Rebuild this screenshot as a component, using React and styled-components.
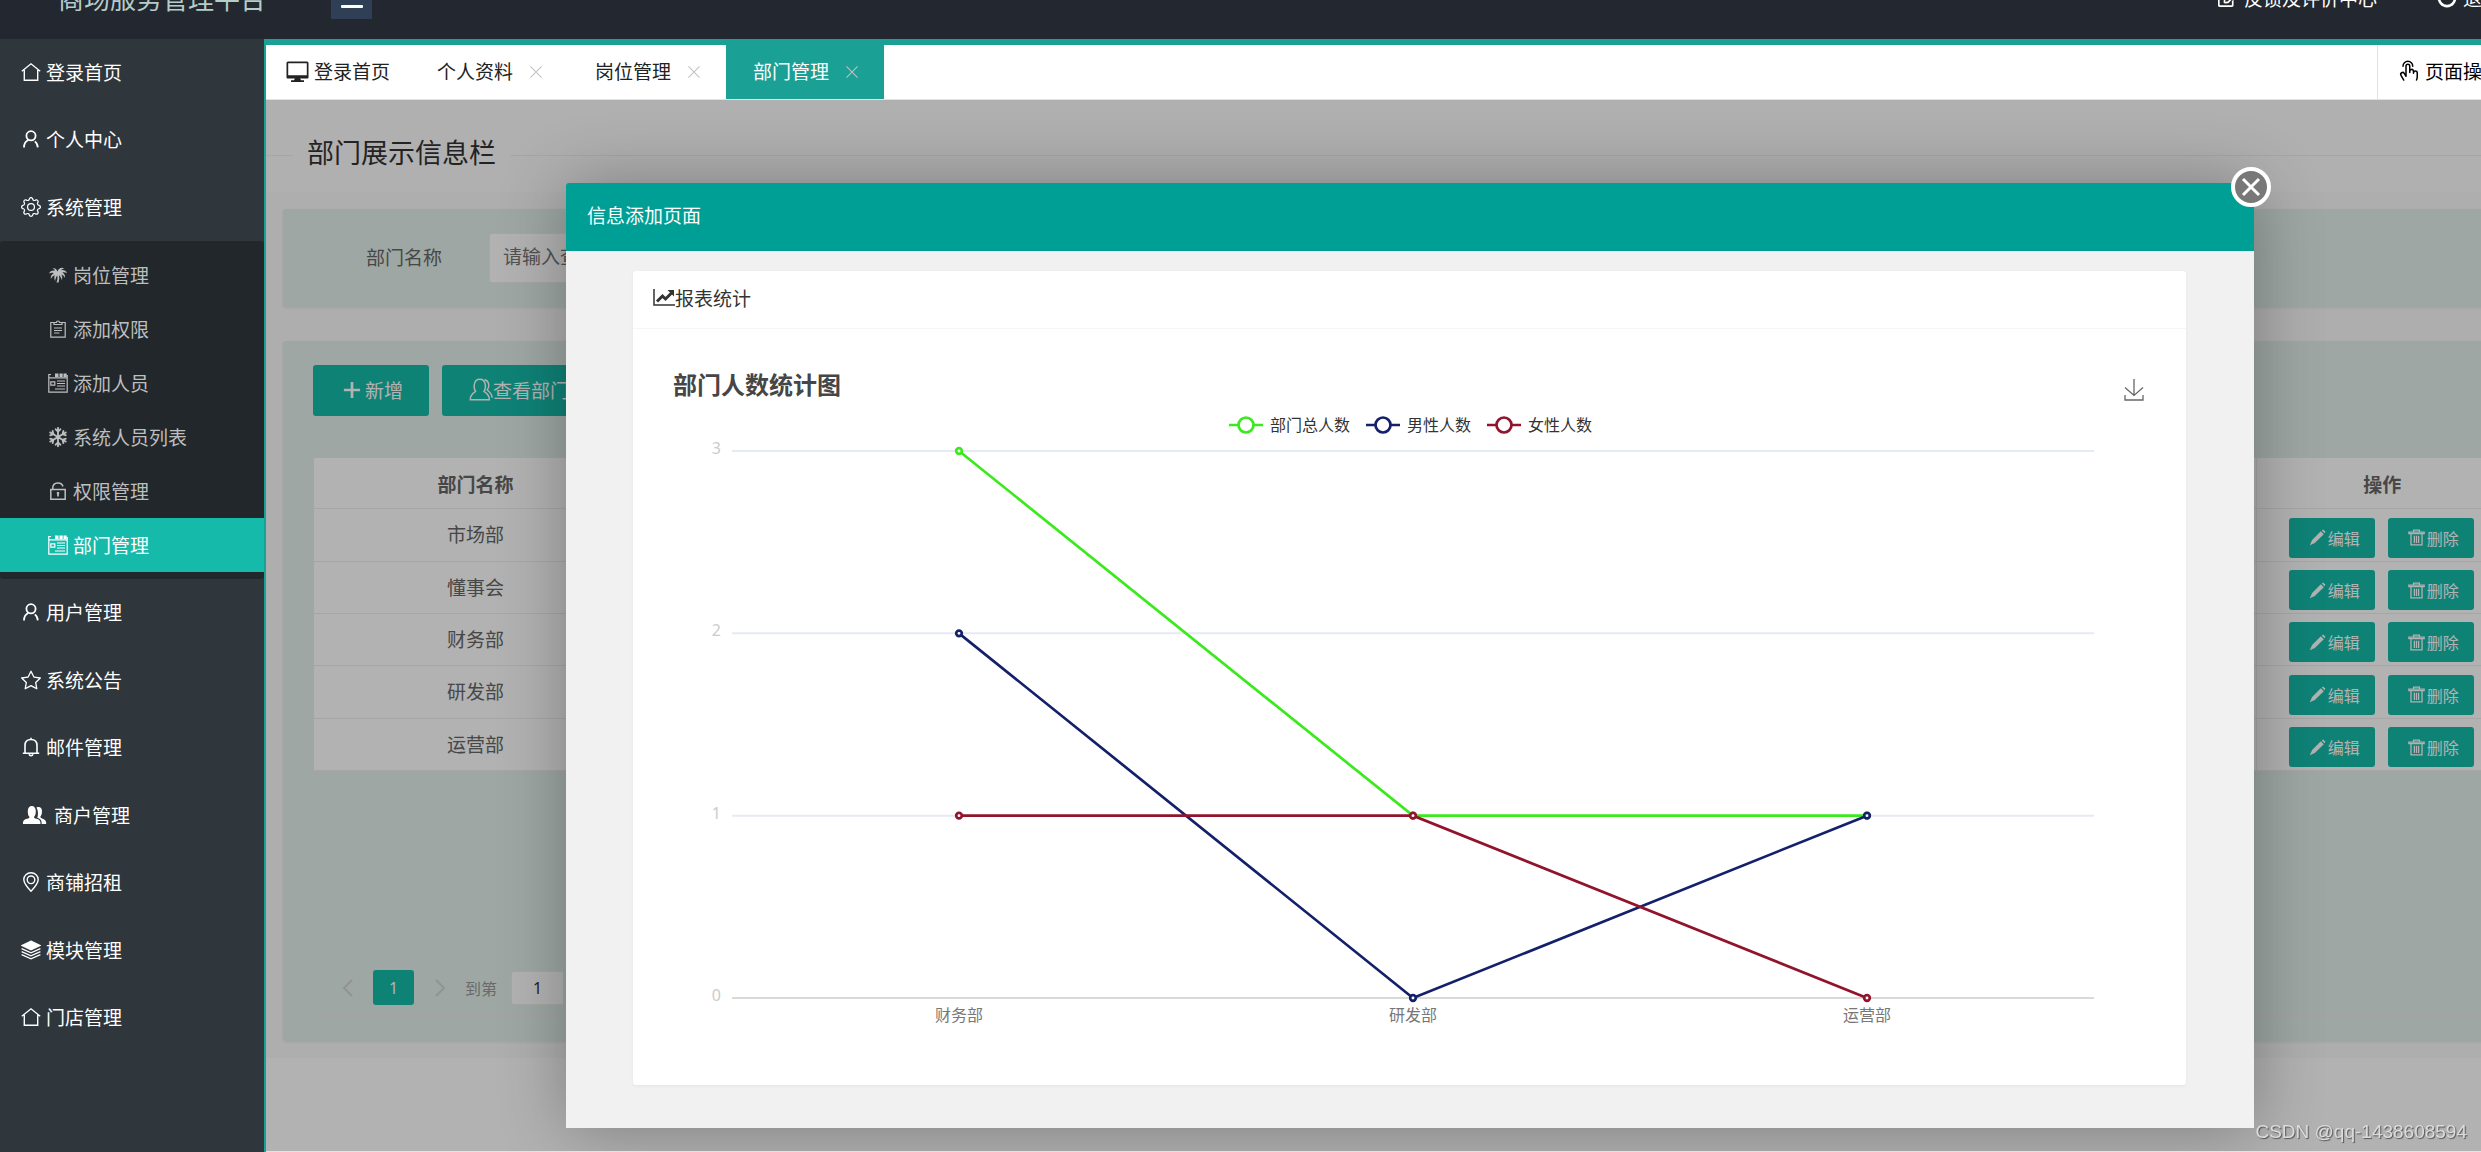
import React,{useState} from 'react'
import styled,{createGlobalStyle} from 'styled-components'
import {BsGear,BsStar} from 'react-icons/bs'
import {FaRegSnowflake,FaRegEdit} from 'react-icons/fa'
import {PiHandTap} from 'react-icons/pi'

const GlobalStyle = createGlobalStyle`
    *{
        box-sizing:border-box;
    }
    html,body,#root{
        height:100%;
        margin:0;
    }
    body{
        overflow:hidden;
        font-family:"Microsoft YaHei","Noto Sans","Noto Sans CJK SC",sans-serif;
        font-size:19px;
        color:#333;
    }
    button,input{
        font-family:inherit;
        font-size:inherit;
    }
    button{
        border:none;
        padding:0;
        background:none;
        color:inherit;
        cursor:pointer;
    }
    a{
        color:inherit;
        text-decoration:none;
    }
    ul{
        list-style:none;
        margin:0;
        padding:0;
    }
    svg{
        flex-shrink:0;
    }
`

const Line = ({size = 20,width = 1.4,children}) => (
    <svg width={size} height={size} viewBox="0 0 20 20" fill="none" stroke="currentColor" strokeWidth={width} aria-hidden="true">
        {children}
    </svg>
)

const HomeIcon = () => (
    <Line><path d="M.8 9.2 10 1.8l9.200 7.400M3.300 8v10.200h13.400V8"/></Line>
)
const PersonIcon = () => (
    <Line width={1.8}>
        <circle cx="10" cy="6.800" r="4.600"/>
        <path d="M3 18.400c0-3.500 1.500-6 4.200-7.400M13.800 12.400c1.900 1.400 2.800 3.400 3 6"/>
    </Line>
)
const PalmIcon = () => (
    <svg width="20" height="20" viewBox="0 0 20 20" fill="currentColor" aria-hidden="true">
        <path d="M9.500 6.500C8.500 3.500 6.500 2.500 4.500 3.500c1.500.3 2 1 2.500 2.200C4 5 2 6.500 1 8.500c2-.8 3.300-.8 4.800-.3C3.500 9.200 2.500 11.500 2.800 14c1-2 2.300-3.200 4-3.800C6 12 6.200 14 7.200 16c.2-2.500.9-4.200 2.100-5.600.4 2.600.2 4.600-.8 7.100h2c.8-2.500.9-4.700.5-7.300 1.500 1.300 2.400 2.800 2.800 5 .8-2.200.6-4.200-.6-5.700 1.800.4 3 1.600 3.800 3.500.4-2.400-.6-4.600-2.600-5.600 1.500-.4 3-.1 4.600.8-.9-2.200-3-3.500-6-3 .8-1 1.800-1.500 3.300-1.500C14 2 10.800 2.800 9.500 6.500z"/>
    </svg>
)
const ClipboardIcon = () => (
    <Line width={1.200}>
        <path d="M6 3.500H2.800v14.700h14.400V3.500H14M6 5.500v-2h2.500a1.500 1.500 0 0 1 3 0H14v2zM6 9h8M6 11.500h8M6 14h5.500"/>
    </Line>
)
const CalendarIcon = () => (
    <Line width={1.200}>
        <path d="M3 1.500H.8v17.700h18.400V2M.8 4.800h18.400"/>
        <path d="M7 2.300h3.500M11.500 2.300h3.200M15.500 2.300h3.200" strokeWidth="3.600"/>
        <path d="M2.800 8.800h4v3.400h-4zM9 8h8M9 10.500h8M9 13h8M7 16h10"/>
    </Line>
)
const LockIcon = () => (
    <Line width={1.500}>
        <path d="M2.800 8.500h14.400v9.700H2.800zM4.800 8V6.500a5.200 4.800 0 0 1 10.200-1"/>
        <path d="M10 11v4.500M8.800 12.200h2.400" strokeWidth="1.800"/>
    </Line>
)
const BellIcon = () => (
    <Line width={1.600}>
        <path d="M1.800 16.200h16.400M4 16V8.500C4 4.500 6.500 2.500 10 2.500s6 2 6 6V16M10 .800v2M8 17.200a2.100 2.100 0 0 0 4 0"/>
    </Line>
)
const MerchantIcon = () => (
    <svg width="28" height="20" viewBox="0 0 28 20" fill="currentColor" aria-hidden="true">
        <path d="M2 19c-.2-3.500 1.500-4.500 4-5.200 2-.6 2.500-1 2.500-1.800C7 10.500 6.800 8.500 6.800 6c0-3 1.500-5 4-5s4 2 4 5c0 2.500-.4 4.500-1.800 6 0 .8.500 1.200 2.500 1.800 2.500.7 4.200 1.700 4 5.200z"/>
        <path d="M15.500 2.600c3.400-1.500 5.700.6 5.500 4.200-.1 2.200-.6 3.700-1.700 5 0 .9.700 1.200 2.400 1.900 2.400.9 3.700 2 3.500 5.300h-4.500c.1-3.300-1-5-4.400-6.200 1-2.800 1-7-.800-10.200z"/>
    </svg>
)
const PinIcon = () => (
    <Line>
        <path d="M10 19.300C5.500 14.500 2.800 11 2.800 7.500 2.800 3.500 6 .8 10 .8s7.200 2.700 7.200 6.700c0 3.500-2.700 7-7.200 11.800z"/>
        <circle cx="10" cy="7.800" r="3.800"/>
    </Line>
)
const LayersIcon = () => (
    <Line width={1.300}>
        <path d="M10 1.200 19 5.500 10 9.800 1 5.500z" fill="currentColor"/>
        <path d="m.6 8.600 9.400 4.200 9.400-4.200M.6 11.600l9.400 4.200 9.400-4.200M.6 14.600l9.400 4.200 9.400-4.200"/>
    </Line>
)
const MonitorIcon = () => (
    <svg width="23" height="21" viewBox="0 0 23 21" fill="currentColor" aria-hidden="true">
        <path fillRule="evenodd" d="M2 .5h19A1.500 1.500 0 0 1 22.500 2v14.500a1 1 0 0 1-1 1h-20a1 1 0 0 1-1-1V2A1.500 1.500 0 0 1 2 .5zM2.200 2.200v12h18.600v-12z"/>
        <path d="M9 17h5l1 2.200h3V21H5v-1.800h3z"/>
    </svg>
)
const PlusIcon = () => (
    <Line size={18} width={3}><path d="M10 1v18M1 10h18"/></Line>
)
const UsersIcon = () => (
    <Line size={24} width={1.200}>
        <path d="M1 18.200c-.2-3.500 1.500-5 4.500-7C3.500 8.500 3.600 1 9 1s5.500 7.500 3.500 10.200c3 2 4.700 3.500 4.500 7zM13 1.500c3.800.8 4.500 5.500 2.200 8.500 2.800 2 4 3.500 4 6.500"/>
    </Line>
)
const PencilIcon = () => (
    <svg width="17" height="17" viewBox="0 0 17 17" fill="currentColor" aria-hidden="true">
        <path d="m12.800 1.500 1.300-1 2.400 2.300-1 1.400zM11.800 2.200l3 3-9 8.900L.8 16.200l2.300-5.200z"/>
    </svg>
)
const TrashIcon = () => (
    <Line size={17} width={1.500}>
        <path d="M1 5.500V3.800h18v1.700zM6.500 3.500V1.300h7v2.200M3.500 6v12.700h13V6M7.500 8v8.500M10 8v8.500M12.500 8v8.500"/>
    </Line>
)
const TrendIcon = () => (
    <svg width="22" height="18" viewBox="0 0 22 18" fill="none" stroke="currentColor" aria-hidden="true">
        <path d="M1 1v16h21" strokeWidth="1.500"/>
        <path d="m4 13.500 5.500-5.500 3 3 6-6" strokeWidth="3"/>
        <path d="M14.500 2H21v6.500z" fill="currentColor" stroke="none"/>
    </svg>
)
const CrossIcon = ({size = 14,width = 1.500}) => (
    <Line size={size} width={width}><path d="m2 2 16 16M18 2 2 18"/></Line>
)
const PowerIcon = () => (
    <Line width={2.600}><path d="M5.500 3.500a8 8 0 1 0 9 0M10 0v9"/></Line>
)
const ArrowIcon = ({next}) => (
    <svg width="12" height="18" viewBox="0 0 12 18" fill="none" stroke="currentColor" strokeWidth="2" aria-hidden="true">
        <path d={next ? 'm2 1 8 8-8 8' : 'M10 1 2 9l8 8'}/>
    </svg>
)
const DownloadIcon = () => (
    <svg width="20" height="22" viewBox="0 0 20 22" fill="none" stroke="currentColor" strokeWidth="1.300" aria-hidden="true">
        <path d="M10 0v16.500M1 8.500l9 8 9-8M1 16v5h18v-5"/>
    </svg>
)

const menus = [
    {name:'登录首页',icon:<HomeIcon/>},
    {name:'个人中心',icon:<PersonIcon/>},
    {name:'系统管理',icon:<BsGear size={20}/>,children:[
        {name:'岗位管理',icon:<PalmIcon/>},
        {name:'添加权限',icon:<ClipboardIcon/>},
        {name:'添加人员',icon:<CalendarIcon/>},
        {name:'系统人员列表',icon:<FaRegSnowflake size={20}/>},
        {name:'权限管理',icon:<LockIcon/>},
        {name:'部门管理',icon:<CalendarIcon/>},
    ]},
    {name:'用户管理',icon:<PersonIcon/>},
    {name:'系统公告',icon:<BsStar size={20}/>},
    {name:'邮件管理',icon:<BellIcon/>},
    {name:'商户管理',icon:<MerchantIcon/>},
    {name:'商铺招租',icon:<PinIcon/>},
    {name:'模块管理',icon:<LayersIcon/>},
    {name:'门店管理',icon:<HomeIcon/>},
]

const tabs = ['个人资料','岗位管理','部门管理']
const departments = ['市场部','懂事会','财务部','研发部','运营部']

const categories = ['财务部','研发部','运营部']
const series = [
    {name:'部门总人数',color:'#3aea1c',data:[3,1,1]},
    {name:'男性人数',color:'#14206a',data:[2,0,1]},
    {name:'女性人数',color:'#92142c',data:[1,1,0]},
]

const plot = {left:99,right:1461,top:10,bottom:557}
const getX = i => plot.left + (plot.right - plot.left) / categories.length * (i + 0.5)
const getY = v => plot.bottom - (plot.bottom - plot.top) / 3 * v

const Chart = () => (
    <Plot viewBox="0 0 1553 590" role="img" aria-label="部门人数统计图">
        {[3,2,1,0].map(v => (
            <g key={v}>
                <line x1={plot.left} x2={plot.right} y1={getY(v)} y2={getY(v)} stroke={v === 0 ? '#ccc' : '#e6eaf4'} strokeWidth={v === 0 ? 1.500 : 2}/>
                <text x="88" y={getY(v) + 3} textAnchor="end" fill="#ccc">{v}</text>
            </g>
        ))}
        {categories.map((c,i) => (
            <text key={c} x={getX(i)} y="580" textAnchor="middle" fill="#777">{c}</text>
        ))}
        {series.map(s => (
            <g key={s.name} stroke={s.color} strokeWidth="2.700" fill="none">
                <polyline points={s.data.map((v,i) => `${getX(i)},${getY(v)}`).join(' ')}/>
                {s.data.map((v,i) => <circle key={i} cx={getX(i)} cy={getY(v)} r="2.800" fill="#fff"/>)}
            </g>
        ))}
    </Plot>
)

const App = () => {
    const [current,setCurrent] = useState('部门管理');

  return (
    <Shell>
        <GlobalStyle/>
        <Header>
            <HeaderInner>
                <Brand>商场服务管理平台</Brand>
                <MenuToggle aria-label="menu">
                    <i/><i/><i/>
                </MenuToggle>
                <HeaderLinks>
                    <a href="#feedback"><FaRegEdit size={20}/>反馈及评价中心</a>
                    <a href="#logout"><PowerIcon/>退出</a>
                </HeaderLinks>
            </HeaderInner>
        </Header>

        <Body>
            <Sidebar>
                <ul>
                    {menus.map(m => (
                        <MenuItem key={m.name}>
                            <MenuLink href="#menu">{m.icon}{m.name}</MenuLink>
                            {m.children &&
                                <SubMenu>
                                    {m.children.map(c => (
                                        <li key={c.name}>
                                            <SubLink href="#menu" $active={c.name === current} onClick={()=>setCurrent(c.name)}>
                                                {c.icon}{c.name}
                                            </SubLink>
                                        </li>
                                    ))}
                                </SubMenu>
                            }
                        </MenuItem>
                    ))}
                </ul>
            </Sidebar>

            <Main>
                <TabBar>
                    <HomeTab><MonitorIcon/>登录首页</HomeTab>
                    {tabs.map(t => (
                        <Tab key={t} $active={t === current}>
                            <button onClick={()=>setCurrent(t)}>{t}</button>
                            <button className="close" aria-label={`关闭${t}`}><CrossIcon/></button>
                        </Tab>
                    ))}
                    <PageAction><PiHandTap size={24}/>页面操作</PageAction>
                </TabBar>

                <Frame>
                    <PageTitle><h2>部门展示信息栏</h2></PageTitle>
                    <Content>
                        <SearchPanel>
                            <label htmlFor="dept">部门名称</label>
                            <input id="dept" placeholder="请输入查询部门名称"/>
                        </SearchPanel>
                        <ListPanel>
                            <Toolbar>
                                <Button><PlusIcon/>新增</Button>
                                <Button $tight><UsersIcon/>查看部门人数</Button>
                            </Toolbar>
                            <TableView>
                                <Table>
                                    <colgroup>
                                        <col className="name"/>
                                        <col/>
                                        <col className="action"/>
                                    </colgroup>
                                    <thead>
                                        <tr><th>部门名称</th><th></th><th>操作</th></tr>
                                    </thead>
                                    <tbody>
                                        {departments.map(d => (
                                            <tr key={d}>
                                                <td>{d}</td>
                                                <td></td>
                                                <td>
                                                    <Actions>
                                                        <SmallButton><PencilIcon/>编辑</SmallButton>
                                                        <SmallButton><TrashIcon/>删除</SmallButton>
                                                    </Actions>
                                                </td>
                                            </tr>
                                        ))}
                                    </tbody>
                                </Table>
                                <Pager>
                                    <PageArrow aria-label="上一页"><ArrowIcon/></PageArrow>
                                    <PageNumber>1</PageNumber>
                                    <PageArrow aria-label="下一页"><ArrowIcon next/></PageArrow>
                                    <label>到第<input defaultValue="1"/></label>
                                </Pager>
                            </TableView>
                        </ListPanel>
                    </Content>

                    <Backdrop/>
                    <Modal role="dialog" aria-label="信息添加页面">
                        <ModalTitle>信息添加页面</ModalTitle>
                        <ModalBody>
                            <Card>
                                <CardTitle><TrendIcon/>报表统计</CardTitle>
                                <ChartHead>
                                    <h3>部门人数统计图</h3>
                                    <button aria-label="下载"><DownloadIcon/></button>
                                </ChartHead>
                                <Legend>
                                    {series.map(s => (
                                        <li key={s.name}>
                                            <svg width="34" height="18" viewBox="0 0 34 18" stroke={s.color} strokeWidth="2.700" fill="#fff" aria-hidden="true">
                                                <path d="M0 9h34"/>
                                                <circle cx="17" cy="9" r="7.500"/>
                                            </svg>
                                            {s.name}
                                        </li>
                                    ))}
                                </Legend>
                                <Chart/>
                            </Card>
                        </ModalBody>
                        <ModalClose aria-label="关闭"><CrossIcon size={20} width={3}/></ModalClose>
                    </Modal>
                </Frame>
            </Main>
        </Body>
        <Watermark>CSDN @qq-1438608594</Watermark>
    </Shell>
  )
}

// a little wider than the window, the right edge runs out of view
const Shell = styled.div`
    display:flex;
    flex-direction:column;
    width:calc(100% + 75px);
    height:100%;
`

const Header = styled.header`
    display:flex;
    align-items:flex-end;
    height:39px;
    flex-shrink:0;
    overflow:hidden;
    background:#23272f;
    color:#fff;
`

const HeaderInner = styled.div`
    display:flex;
    align-items:center;
    flex:1;
    height:82px;
    padding-left:58px;
`

const Brand = styled.div`
    width:273px;
    font-family:STXingkai,"Noto Sans CJK SC",sans-serif;
    font-size:26px;
    line-height:32px;
    color:#b5cdc8;
`

const MenuToggle = styled.button`
    display:flex;
    flex-direction:column;
    align-items:center;
    justify-content:center;
    gap:5px;
    width:41px;
    height:41px;
    background:#2f4056;
    i{
        width:22px;
        height:3px;
        border-radius:1px;
        background:#fff;
    }
`

const HeaderLinks = styled.nav`
    display:flex;
    gap:60px;
    margin-left:auto;
    padding-right:55px;
    a{
        display:flex;
        align-items:center;
        gap:6px;
        white-space:nowrap;
    }
`

const Body = styled.div`
    display:flex;
    flex:1;
    min-height:0;
`

const Sidebar = styled.aside`
    width:264px;
    flex-shrink:0;
    overflow:hidden;
    background:#2f363c;
    color:#fff;
`

const MenuLink = styled.a`
    display:flex;
    align-items:center;
    gap:5px;
    height:67px;
    padding:0 0 2px 21px;
`

const MenuItem = styled.li`
    &:nth-child(even) > ${MenuLink}{
        height:68px;
    }
`

const SubMenu = styled.ul`
    padding:7px 0;
    background:#22272b;
    border-radius:3px;
`

const SubLink = styled.a`
    display:flex;
    align-items:center;
    gap:5px;
    height:54px;
    padding:0 0 1px 48px;
    color:${p => p.$active ? '#fff' : '#bdbebf'};
    background:${p => p.$active ? '#16baaa' : 'transparent'};
`

const Main = styled.main`
    display:flex;
    flex-direction:column;
    flex:1;
    min-width:0;
    border-left:2px solid #1aa094;
    border-top:6px solid #1aa094;
`

const TabBar = styled.div`
    display:flex;
    height:55px;
    flex-shrink:0;
    background:#fff;
    border-bottom:1px solid #e2e2e2;
    color:#222;
`

const HomeTab = styled.button`
    display:flex;
    align-items:center;
    gap:5px;
    padding:0 20px 2px;
`

const Tab = styled.div`
    display:flex;
    align-items:center;
    gap:16px;
    padding:0 25px 2px 27px;
    color:${p => p.$active ? '#fff' : '#222'};
    background:${p => p.$active ? '#1aa094' : 'transparent'};
    .close{
        display:flex;
        padding-top:2px;
        color:#c2c2c2;
    }
`

const PageAction = styled.button`
    display:flex;
    align-items:center;
    gap:4px;
    width:179px;
    margin-left:auto;
    padding:0 0 2px 19px;
    border-left:1px solid #e2e2e2;
    color:#000;
`

const Frame = styled.section`
    position:relative;
    flex:1;
    overflow:hidden;
    background:#fff;
    border-bottom:1px solid #e2e2e2;
`

const PageTitle = styled.div`
    display:flex;
    align-items:center;
    height:92px;
    padding-top:18px;
    background:#fdfdfd;
    &::before{
        content:"";
        width:27px;
        border-top:1px solid #eee;
    }
    &::after{
        content:"";
        flex:1;
        border-top:1px solid #eee;
    }
    h2{
        margin:0;
        padding:0 14px 6px;
        font-family:STXingkai,"Noto Sans CJK SC",sans-serif;
        font-size:27px;
        line-height:36px;
        font-weight:400;
    }
`

const Content = styled.div`
    display:flex;
    flex-direction:column;
    gap:34px;
    padding:17px;
    background:#f9f9f9;
`

const SearchPanel = styled.div`
    display:flex;
    align-items:center;
    gap:47px;
    height:98px;
    padding-left:83px;
    border-radius:3px;
    background:#e3f0eb;
    box-shadow:0 1px 3px rgba(0,0,0,0.08);
    color:#666;
    label{
        padding-bottom:2px;
    }
    input{
        width:260px;
        height:50px;
        padding:0 13px 2px;
        border:1px solid #eee;
        border-radius:3px;
        background:#fff;
    }
    input::placeholder{
        color:#757575;
    }
`

const ListPanel = styled(SearchPanel).attrs({as:'section'})`
    display:block;
    height:auto;
    padding:24px 30px;
`

const Toolbar = styled.div`
    display:flex;
    gap:13px;
    margin-bottom:41px;
`

const Button = styled.button`
    display:flex;
    align-items:center;
    gap:${p => p.$tight ? '0' : '4px'};
    height:51px;
    padding:0 26px 1px ${p => p.$tight ? '27px' : '30px'};
    border-radius:3px;
    background:#16baaa;
    color:#fff;
`

const TableView = styled.div`
    border:1px solid #ececec;
`

const Table = styled.table`
    width:100%;
    table-layout:fixed;
    border-collapse:collapse;
    background:#fff;
    .name{
        width:323px;
    }
    .action{
        width:252px;
    }
    tr{
        height:52px;
        border-bottom:1px solid #eee;
    }
    thead tr{
        height:50px;
    }
    tbody tr:nth-child(3n+1){
        height:53px;
    }
    th,td{
        padding:1px 0 0;
        line-height:26px;
        text-align:center;
    }
    th{
        padding-top:4px;
    }
    th:last-child,td:last-child{
        border-left:1px solid #eee;
    }
`

const Actions = styled.div`
    display:flex;
    justify-content:center;
    gap:13px;
    padding:5px 2px 0 0;
`

const SmallButton = styled.button`
    display:flex;
    align-items:center;
    gap:2px;
    width:86px;
    height:40px;
    padding-left:20px;
    border-radius:3px;
    background:#16baaa;
    color:#fff;
    font-size:16px;
`

const Pager = styled.div`
    display:flex;
    align-items:center;
    height:56px;
    margin-top:189px;
    padding-left:18px;
    font-size:16px;
    color:#999;
    label{
        display:flex;
        align-items:center;
        gap:14px;
        padding:0 0 0 10px;
    }
    input{
        width:53px;
        height:34px;
        padding:0;
        text-align:center;
        color:#333;
    }
`

const PageArrow = styled.button`
    display:flex;
    align-items:center;
    width:41px;
    padding-left:10px;
    color:#d2d2d2;
    &:nth-child(3){
        padding-left:20px;
    }
`

const PageNumber = styled.button`
    width:41px;
    height:35px;
    border-radius:3px;
    background:#16baaa;
    color:#fff;
`

const Backdrop = styled.div`
    position:absolute;
    inset:0;
    background:rgba(0,0,0,0.3);
`

const Modal = styled.div`
    position:absolute;
    top:83px;
    bottom:23px;
    left:300px;
    right:302px;
    display:flex;
    flex-direction:column;
    border-radius:3px;
    box-shadow:1px 1px 68px rgba(0,0,0,0.3);
`

const ModalTitle = styled.div`
    height:68px;
    flex-shrink:0;
    padding-left:21px;
    line-height:66px;
    border-radius:3px 3px 0 0;
    background:#009f95;
    color:#fff;
`

const ModalBody = styled.div`
    flex:1;
    padding:20px 68px 43px 67px;
    background:#f1f1f1;
`

const Card = styled.div`
    height:100%;
    border-radius:3px;
    background:#fff;
    box-shadow:0 1px 3px rgba(0,0,0,0.06);
`

const CardTitle = styled.div`
    display:flex;
    align-items:center;
    height:58px;
    padding:0 20px 5px;
    border-bottom:1px solid #f6f6f6;
    font-family:STXingkai,"Noto Sans CJK SC",sans-serif;
`

const ChartHead = styled.div`
    display:flex;
    align-items:center;
    justify-content:space-between;
    height:34px;
    margin-top:39px;
    padding:0 42px 0 40px;
    color:#666;
    h3{
        margin:0;
        font-size:24px;
        line-height:34px;
        color:#464646;
    }
    button{
        display:flex;
        padding-top:9px;
    }
`

const Legend = styled.ul`
    display:flex;
    justify-content:center;
    gap:16px;
    margin-top:11px;
    padding-left:2px;
    font-size:16px;
    line-height:24px;
    li{
        display:flex;
        align-items:center;
        gap:7px;
    }
`

const Plot = styled.svg`
    display:block;
    width:100%;
    margin-top:4px;
    font-size:16px;
`

const ModalClose = styled.button`
    position:absolute;
    top:-16px;
    right:-17px;
    display:flex;
    align-items:center;
    justify-content:center;
    width:40px;
    height:40px;
    border:4px solid #fff;
    border-radius:50%;
    background:#787878;
    color:#fff;
`

const Watermark = styled.div`
    position:fixed;
    right:14px;
    bottom:8px;
    font-family:"Liberation Sans",Arial,sans-serif;
    font-size:19px;
    line-height:24px;
    color:#dcdcdc;
    text-shadow:1px 1px 1px #555;
`

export default App
